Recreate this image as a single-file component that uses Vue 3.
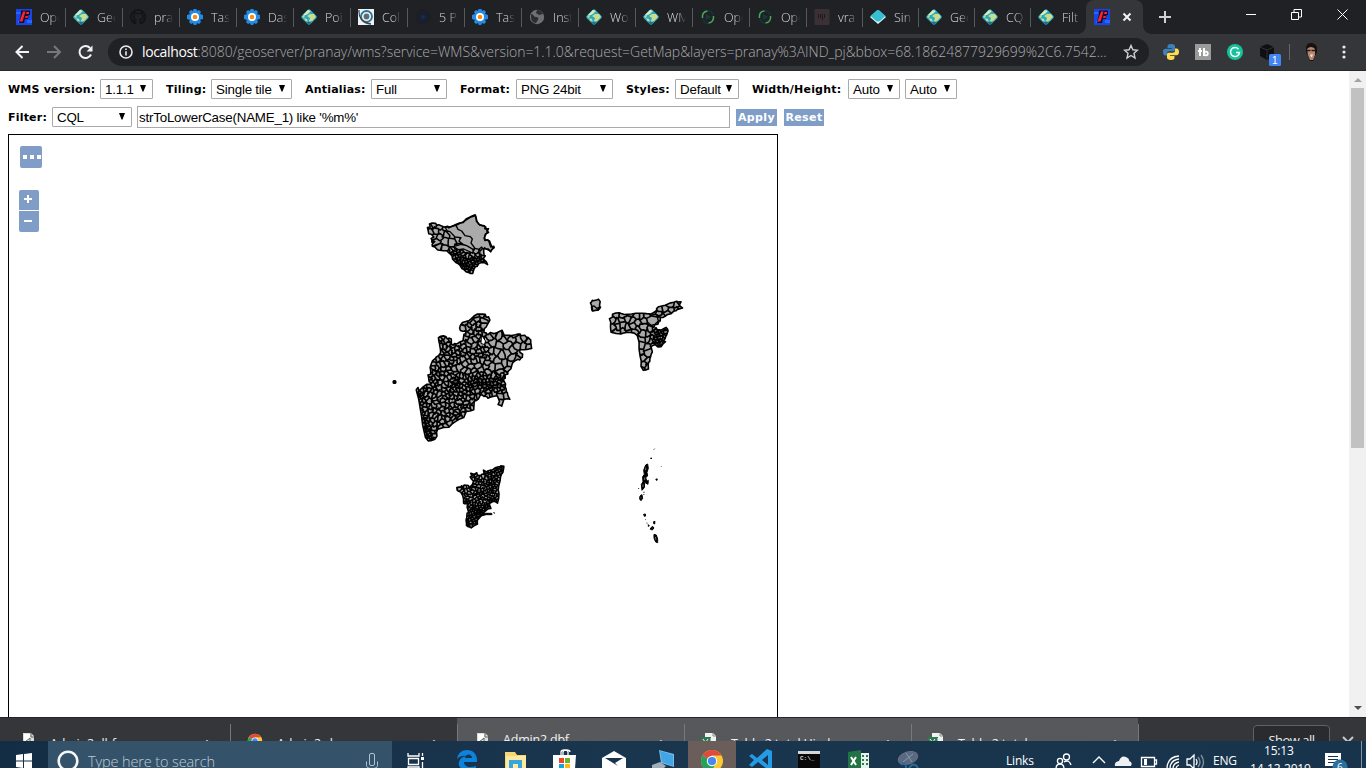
<script setup>
const tabs = [
  ['flag', 'Ope'], ['globe', 'Geo'], ['github', 'pra'], ['gear', 'Tas'], ['gear', 'Das'], ['globe', 'Poi'],
  ['target', 'Col'], ['dot', '5 Po'], ['gear', 'Tas'], ['world', 'Inst'], ['globe', 'Wo'], ['globe', 'WM'],
  ['sync', 'Ope'], ['sync', 'Ope'], ['bars', 'vra'], ['gem', 'Sin'], ['globe', 'Geo'], ['globe', 'CQ'], ['globe', 'Filt'],
].map(([icon, title], i) => ({ icon, title, w: i < 14 ? 57 : 56 }))

const options = [
  { label: 'WMS version:', lw: 92, value: '1.1.1', w: 53, gap: 13 },
  { label: 'Tiling:', lw: 45, value: 'Single tile', w: 81, gap: 13 },
  { label: 'Antialias:', lw: 66, value: 'Full', w: 76, gap: 13 },
  { label: 'Format:', lw: 56, value: 'PNG 24bit', w: 97, gap: 13 },
  { label: 'Styles:', lw: 49, value: 'Default', w: 64, gap: 13 },
  { label: 'Width/Height:', lw: 96, value: 'Auto', w: 52, gap: 5 },
  { label: '', lw: 0, value: 'Auto', w: 52, gap: 0 },
]

const downloads = [
  { name: 'Admin2.dbf', icon: 'file', w: 230, lit: false },
  { name: 'Admin2.shx', icon: 'chrome', w: 227, lit: false },
  { name: 'Admin2.dbf', icon: 'file', w: 227, lit: true, raised: true },
  { name: 'Table 2 tutal Hind', icon: 'sheet', w: 227, lit: true },
  { name: 'Table 2 tutal', icon: 'sheet', w: 227, lit: true },
]

/* ---- district mesh ---- */
let seedValue = 7
const rand = () => {
  seedValue = (seedValue * 1664525 + 1013904223) % 4294967296
  return seedValue / 4294967296
}
const parse = (s) => s.split(' ').map((p) => p.split(',').map(Number))
const inside = (poly, x, y) => {
  let hit = false
  for (let i = 0, j = poly.length - 1; i < poly.length; j = i++) {
    const [xi, yi] = poly[i], [xj, yj] = poly[j]
    if (yi > y !== yj > y && x < ((xj - xi) * (y - yi)) / (yj - yi) + xi) hit = !hit
  }
  return hit
}
const cut = (poly, a, b) => {
  const nx = b[0] - a[0], ny = b[1] - a[1]
  const mx = (a[0] + b[0]) / 2, my = (a[1] + b[1]) / 2
  const side = (p) => (p[0] - mx) * nx + (p[1] - my) * ny
  const out = []
  for (let i = 0; i < poly.length; i++) {
    const p = poly[i], q = poly[(i + 1) % poly.length]
    const sp = side(p), sq = side(q)
    if (sp <= 0) out.push(p)
    if (sp < 0 !== sq < 0) {
      const t = sp / (sp - sq)
      out.push([p[0] + (q[0] - p[0]) * t, p[1] + (q[1] - p[1]) * t])
    }
  }
  return out
}
/* smooth distortion that gives the borders a ragged look */
const warp = ([x, y]) => [x + 2.6 * Math.sin(y * 0.71 + x * 0.33), y + 2.6 * Math.sin(x * 0.63 - y * 0.29)]
const rough = (c) => c.flatMap((p, i) => {
  const q = c[(i + 1) % c.length]
  return [warp(p), warp([(p[0] + q[0]) / 2, (p[1] + q[1]) / 2])]
})
const toPath = (pts) => 'M' + pts.map((v) => v[0].toFixed(1) + ' ' + v[1].toFixed(1)).join('L') + 'Z'
const mesh = (outline, spacing) => {
  const poly = parse(outline)
  const xs = poly.map((p) => p[0]), ys = poly.map((p) => p[1])
  const x0 = Math.min(...xs), x1 = Math.max(...xs), y0 = Math.min(...ys), y1 = Math.max(...ys)
  const pts = []
  for (let n = 0; n < 9000; n++) {
    const x = x0 + rand() * (x1 - x0), y = y0 + rand() * (y1 - y0)
    const r = spacing(x, y)
    if (inside(poly, x, y) && pts.every((p) => (p[0] - x) ** 2 + (p[1] - y) ** 2 > r * r)) pts.push([x, y])
  }
  return pts.map((p) => {
    let c = [[p[0] - 30, p[1] - 30], [p[0] + 30, p[1] - 30], [p[0] + 30, p[1] + 30], [p[0] - 30, p[1] + 30]]
    for (const q of pts) if (q !== p && Math.abs(q[0] - p[0]) < 62 && Math.abs(q[1] - p[1]) < 62) c = cut(c, p, q)
    return toPath(rough(c))
  }).join('')
}

const regions = [
  {
    id: 'north', ox: 376, oy: 70, sw: 4.6,
    outline: '130,70 136,58 150,55 165,62 180,65 192,66 213,60 235,50 256,37 272,32 276,48 284,60 298,62 302,70 308,72 308,80 299,93 300,104 314,108 320,124 328,128 315,138 300,130 294,132 300,150 297,160 308,180 290,170 280,180 270,185 265,203 250,205 235,195 222,182 210,170 200,150 190,143 175,135 155,133 140,122 148,112 138,106 144,95 134,86',
    r: (x, y) => (y > 134 && x > 190 ? (x > 235 && y < 152 ? 16 : 6.8) : 15.5),
    extra: 'M213 61L235 50L256 37L272 32L276 48L284 60L298 62L302 70L308 72L308 80L299 93L300 104L314 108L320 124L328 128L315 138L300 130L294 132L290 126L282 133L270 130L258 114L262 102L256 95L240 92L230 78L219 73ZM180 66L192 66L213 61L219 73L230 78L240 92L256 95L262 102L258 114L270 130L264 133L245 122L236 119L222 108L228 98L210 96L195 80L187 78ZM205 125L228 118L245 122L264 133L264 145L250 138L236 132L220 134Z',
  },
  {
    id: 'central', ox: 376, oy: 70, sw: 5,
    outline: '225,365 230,355 245,348 258,340 280,328 300,330 312,338 312,350 302,365 298,380 305,388 315,385 328,384 350,378 360,388 380,390 398,385 410,392 425,395 438,403 438,428 420,432 408,436 405,440 415,450 408,460 400,465 385,475 376,490 366,505 362,512 356,524 362,545 362,560 370,570 372,582 358,585 352,603 342,600 340,575 326,572 310,578 300,574 290,570 278,582 270,590 265,612 245,620 235,635 215,650 190,665 165,672 155,680 152,705 135,710 120,700 115,660 105,610 93,560 98,548 105,560 120,538 135,540 135,528 128,518 135,505 134,490 145,470 154,455 163,448 168,432 163,415 163,400 175,392 185,402 200,402 200,420 208,417 220,412 235,410 238,390 244,380 225,374',
    r: (x, y) => (y > 560 && x > 335 ? 16 : y < 512 && x > 305 ? 16 : y > 508 && x > 200 && y < 560 ? 7.5 : x > 215 && y > 465 && y < 508 ? 14 : y > 550 && x < 108 + (y - 550) * 0.25 ? 6.5 : y < 430 && x > 230 ? 11.5 : 9.6),
    extra: '',
  },
  {
    id: 'east', ox: 561, oy: 150, sw: 5,
    outline: '120,100 130,88 145,85 165,88 200,82 220,82 240,85 256,80 262,70 275,65 300,55 318,50 333,48 330,58 335,68 320,75 310,78 290,90 276,95 270,105 265,115 253,122 245,128 248,140 256,130 272,134 288,127 292,140 290,155 280,164 285,172 274,187 258,180 244,187 245,210 238,220 236,235 238,250 218,254 212,230 208,195 204,152 195,147 170,142 150,145 125,142 122,125',
    r: (x, y) => (x > 247 && y > 126 ? 7 : 14),
    extra: 'M230 100L245 93L262 96L265 108L255 118L243 121L233 112Z',
  },
  { id: 'isle', ox: 561, oy: 150, sw: 3, outline: '63,62 64,50 72,45 88,45 89,56 92,70 84,76 66,77', r: () => 400, extra: 'M64 66L72 63L80 70L92 66L84 76L66 77Z' },
  {
    id: 'south', ox: 431, oy: 310, sw: 4.4,
    outline: '48,130 60,124 70,126 75,121 90,125 100,108 92,98 95,86 108,85 118,92 128,90 133,78 145,80 155,72 170,70 180,62 189,65 189,80 184,98 175,115 172,135 175,150 172,172 158,170 150,176 152,190 140,197 125,210 118,220 110,235 95,247 83,246 79,238 82,215 85,200 81,176 70,175 70,150 58,138',
    r: (x, y) => (x > 145 || y > 175 ? 6.2 : 7.8),
    extra: '',
  },
].map((g) => ({ ...g, d: toPath(rough(parse(g.outline))), cells: mesh(g.outline, g.r) }))

const islands = [
  'M617 60L623 57L625 70L621 82L623 93L617 98L621 109L625 106L624 118L614 112L613 128L606 136L604 118L609 111L608 95L613 88L611 76Z',
  'M600 153L606 149L608 160L603 167L599 162Z', 'M611 208L616 207L617 213L613 214Z',
  'M641 230L645 229L644 237L641 236Z', 'M632 249L638 244L642 249L637 255L631 253Z',
  'M642 268L649 270L653 282L653 293L647 291L642 279Z', 'M632 39L635 39L634 42Z', 'M648 102L652 102L651 106L648 105Z',
  'M625 239L628 243L625 244Z', 'M121 210L136 205L155 205L156 209L138 209L124 213Z', 'M161 203L163 203L163 205Z',
]
</script>

<template>
  <div class="screen">
    <svg class="defs" width="0" height="0">
      <symbol id="flag" viewBox="0 0 16 16"><rect width="16" height="16" fill="#1745e8" /><path d="M0 3h4v2H0zm11 8h5v3h-5zM2 12h4v2H2z" fill="#2867ff" /><path d="M5 1.500h9V6h-1.500l-.5 4H9v-.5L8 14H3L5 5z" fill="#150c35" /><path d="M7 2.500h2.500L6.500 12.500h-3zM10.500 3H13v2h-3zM9.500 7H12l-.5 2H9z" fill="#ff251c" /></symbol>
      <symbol id="globe" viewBox="0 0 16 16"><path d="M6.500 1q1.500-1.500 3 0L15 6.500q1.500 1.500 0 3L9.500 15q-1.500 1.500-3 0L1 9.500q-1.500-1.500 0-3z" fill="#29a8c4" /><path d="M7 1l3 1-3 3-3 1-1 3-2-1zm2 4l4 0 2 3-3 3-2 3-2-2 1-3-3-2zM3 9l3 1 1 3-2 0z" fill="#c8dd8e" /><path d="M2 6l5-5 2 1-4 4z" fill="#d3edcc" /><path d="M4 12l4 4 4-4-4 1z" fill="#1a719b" /></symbol>
      <symbol id="github" viewBox="0 0 16 16"><path d="M5.500 15v-2.500c-2 .4-2.700-.8-3-1.500M10.500 15v-2.500c0-.7-.2-1.200-.5-1.500 2-.2 3-1 3-3.300 0-1-.2-1.500-.6-2 .2-.5.2-1.200-.1-2 0 0-.7 0-2 .9a7 7 0 0 0-4 0c-1.300-.9-2-.9-2-.9-.3.800-.3 1.500-.1 2-.5.500-.7 1-.7 2 0 2.300 1 3.100 3 3.300" fill="none" stroke="#121315" stroke-width="1.300" /><path d="M5.500 14.800A7.200 7.200 0 1 1 10.500 14.800" fill="none" stroke="#131416" stroke-width="1.600" /></symbol>
      <symbol id="gear" viewBox="0 0 16 16"><path d="M6.500 0h3l.5 2 2-1 2 2-1 2 3 1v4l-3 .8 1 2.200-2 2-2-1-.8 2H6.800L6 14l-2 1-2-2 1-2-3-1V6l3-1-1-2 2-2 2 1z" fill="#228be6" /><circle cx="8" cy="8" r="4" fill="#fff" /><circle cx="8" cy="8" r="2.300" fill="#ff8a10" /></symbol>
      <symbol id="target" viewBox="0 0 16 16"><rect width="16" height="16" fill="#eef2f3" /><circle cx="8.500" cy="7.500" r="5.500" fill="none" stroke="#22769e" stroke-width="1.800" /><circle cx="8.500" cy="7.500" r="2.900" fill="#646b70" /><path d="M1 1c-.5 7 3 13 12 14" fill="none" stroke="#3b4146" stroke-width="1.300" /></symbol>
      <symbol id="dot" viewBox="0 0 16 16"><circle cx="8" cy="8" r="7.500" fill="#1b1f28" /><circle cx="8" cy="8" r="2" fill="#102d65" /></symbol>
      <symbol id="world" viewBox="0 0 16 16"><circle cx="8" cy="8" r="7.200" fill="#6c6f73" /><path d="M2 5c3 0 2 3 5 3 2 0 3 1 2 3l-2 3c-3 0-5-3-5-6zM8 1l-1 3 3 2 4-1c-1-2-3-4-6-4z" fill="#2b2d30" /></symbol>
      <symbol id="sync" viewBox="0 0 16 16"><path d="M7.500 2C4 2.500 2 5 2.500 9M8.500 14c3.500-.4 5.500-3 5-7" fill="none" stroke="#45a85a" stroke-width="1.500" /><path d="M3 10c.5 2 2 4 5 4.300M13 6c-.5-2-2-4-5-4.300" fill="none" stroke="#153334" stroke-width="1.800" /><path d="M6 5l5 3-5 3z" fill="#163a3e" /></symbol>
      <symbol id="bars" viewBox="0 0 16 16"><rect x=".5" width="15" height="16" rx="1" fill="#3b3035" /><path d="M4.500 5v4M6.500 5v4M8.500 5v6M10.500 5v4" stroke="#1d1a1e" /></symbol>
      <symbol id="gem" viewBox="0 0 16 16"><path d="M0 8l8-7 8 7-8 7z" fill="#e9fbfa" /><path d="M.5 7l6-5.500q1.500-1 3 0l6 5.500-5.500 5q-2 1.500-4 0z" fill="#35bfd0" /></symbol>
      <symbol id="chrome" viewBox="0 0 24 24"><circle cx="12" cy="12" r="11" fill="#fbc931" /><path d="M12 12L2.500 6.500A11 11 0 0 1 21.500 6.500H12z" fill="#df4a3f" /><path d="M2.500 6.500A11 11 0 0 0 11 23l5-9z" fill="#27a25b" /><circle cx="12" cy="12" r="5.200" fill="#f6f6f6" /><circle cx="12" cy="12" r="4.100" fill="#4688f1" /></symbol>
      <symbol id="file" viewBox="0 0 16 16"><path d="M3 0h8l3 3v13H3z" fill="#dcddd4" /><path d="M4 1h6v4L6 8H4z" fill="#fff" /><path d="M11 0v4h3M5 9l5-4v5" fill="none" stroke="#636660" /></symbol>
      <symbol id="sheet" viewBox="0 0 16 16"><path d="M4 0h8l3 3v13H4z" fill="#eef1ee" /><path d="M0 4h10v12H0z" fill="#2d7952" /><path d="M2 6l5 7M7 6l-5 7M9 6h5M9 8h5" stroke="#edf4ee" /><path d="M12 0v3h3" fill="none" stroke="#888" /></symbol>
    </svg>

    <header class="tabstrip">
      <div v-for="(t, i) in tabs" :key="i" class="tab" :style="{ width: t.w + 'px' }">
        <svg width="16" height="16"><use :href="'#' + t.icon" /></svg>
        <span>{{ t.title }}</span>
      </div>
      <div class="tab-active">
        <svg width="16" height="16"><use href="#flag" /></svg>
        <svg class="x" width="10" height="10"><path d="M1.500 1.500l7 7m0-7l-7 7" stroke="#f1f3f4" stroke-width="2" /></svg>
      </div>
      <svg class="plus" width="14" height="14"><path d="M7 1v12M1 7h12" stroke="#d0d1d3" stroke-width="2" /></svg>
      <div class="win">
        <svg width="10" height="10"><path d="M0 5.500h10" stroke="#fff" /></svg>
        <svg width="11" height="11"><path d="M.5 3.500h7v7h-7zM3 3V.5h7.500V8H8" fill="none" stroke="#fff" /></svg>
        <svg width="11" height="11"><path d="M.5.5l10 10m0-10l-10 10" stroke="#fff" /></svg>
      </div>
    </header>

    <div class="toolbar">
      <svg class="nav" width="100" height="36" fill="none" stroke-width="2">
        <path d="M29 18H17M22.500 12L16.500 18l6 6" stroke="#f1f3f4" />
        <path d="M47 18h12M54 12l6 6-6 6" stroke="#77787b" />
        <path d="M91 20.500a6 6 0 1 1-1-6.500" stroke="#f1f3f4" /><path d="M92.500 11.500v6h-6z" fill="#f1f3f4" />
      </svg>
      <div class="omnibox">
        <svg width="14" height="14" fill="none" stroke="#e8eaed" stroke-width="1.600"><circle cx="7" cy="7" r="6" /><path d="M7 6.200v4.200M7 3.500v1.500" /></svg>
        <span class="url"><b>localhost</b>:8080/geoserver/pranay/wms?service=WMS&amp;version=1.1.0&amp;request=GetMap&amp;layers=pranay%3AIND_pj&amp;bbox=68.18624877929699%2C6.7542...</span>
        <svg class="star" width="16" height="16"><path d="M8 1.500l1.900 4.300 4.600.4-3.500 3.100 1 4.700L8 11.500 4 14l1-4.700-3.500-3.100 4.600-.4z" fill="none" stroke="#cfd1d3" stroke-width="1.400" /></svg>
      </div>
      <div class="exts">
        <svg width="16" height="16"><path d="M8 0C5 0 4.500 1 4.500 2.500V4H9v.8H2.500C.8 4.800 0 6 0 8s.8 3.400 2.400 3.400H4V9.500C4 8 5 7.300 6.500 7.300h4c1.200 0 1.500-.8 1.500-2V2.500C12 1 11 0 8 0z" fill="#3b82bd" /><path d="M8 16c3 0 3.500-1 3.500-2.500V12H7v-.8h6.500C15.200 11.200 16 10 16 8s-.8-3.400-2.400-3.400H12v2.500C12 8 11 8.700 9.500 8.700h-4C4.300 8.700 4 9.500 4 10.700v2.800C4 15 5 16 8 16z" fill="#ffdc4e" /></svg>
        <svg width="16" height="16"><rect width="16" height="16" fill="#9a9a9a" /><path d="M5 4v8M3 7h4M9 4v8" stroke="#fff" stroke-width="2" /><circle cx="11" cy="9.500" r="1.800" fill="none" stroke="#fff" stroke-width="1.800" /></svg>
        <svg width="16" height="16"><circle cx="8" cy="8" r="8" fill="#15c39a" /><path d="M11.500 5.200A4.500 4.500 0 1 0 12.500 8.500H9" fill="none" stroke="#fff" stroke-width="1.500" /></svg>
        <svg width="22" height="24"><path d="M8 2l7 3v9l-7 4-7-4V5z" fill="#0e0f10" /><path d="M1 5l7 3 7-3M8 8v9" fill="none" stroke="#303135" /><rect x="10" y="12" width="12" height="12" rx="1.500" fill="#4285f4" /><text x="13" y="22" fill="#fff" font-size="10" font-family="Liberation Sans, sans-serif">1</text></svg>
      </div>
      <div class="profile">
        <svg width="16" height="20"><path d="M2 5q1-4 5-4t6 4l0 5-3 6-1 3H6l-1-3-3-6z" fill="#17120f" /><path d="M3 7q4-4 8 0l0 6-2 5H6l-2-5z" fill="#b98770" /><path d="M3 8.500h3.500m1 0h4" stroke="#18191b" stroke-width="1.300" /><path d="M6 12.500h3l-1 2.500H7z" fill="#f0e6df" /></svg>
      </div>
      <svg class="kebab" width="4" height="16" fill="#e8eaed"><circle cx="2" cy="3" r="1.600" /><circle cx="2" cy="8" r="1.600" /><circle cx="2" cy="13" r="1.600" /></svg>
    </div>

    <main class="page">
      <section class="content">
        <div class="row first">
          <div v-for="(o, i) in options" :key="i" class="opt" :style="{ marginRight: o.gap + 'px' }">
            <label :style="{ width: o.lw + 'px' }">{{ o.label }}</label>
            <div class="select" :style="{ width: o.w + 'px' }">{{ o.value }}<svg width="6" height="7"><path d="M0 0h6L3.500 6.500h-1z" /></svg></div>
          </div>
        </div>
        <div class="row second">
          <label class="flabel">Filter:</label>
          <div class="select cql">CQL<svg width="6" height="7"><path d="M0 0h6L3.500 6.500h-1z" /></svg></div>
          <div class="field">strToLowerCase(NAME_1) like '%m%'</div>
          <div class="btn apply">Apply</div>
          <div class="btn reset">Reset</div>
        </div>
        <div class="map">
          <svg class="layer" width="768" height="582">
            <g v-for="g in regions" :key="g.id" :transform="`translate(${g.ox} ${g.oy}) scale(.3333)`" stroke="#000" stroke-linejoin="round">
              <clipPath :id="g.id"><path :d="g.d" /></clipPath>
              <path :d="g.d" fill="#aaa" stroke="none" />
              <g :clip-path="`url(#${g.id})`"><path :d="g.cells" fill="#aaa" :stroke-width="g.sw" /></g>
              <path :d="g.extra" fill="#aaa" stroke-width="4" />
              <path :d="g.d" fill="none" stroke-width="4.800" />
            </g>
            <path d="M472.500 200l4 6-1 3.500-3.500-1z" fill="#fff" stroke="#000" />
            <rect x="383.500" y="245" width="4" height="4" rx="1.500" />
            <g transform="translate(431 310) scale(.3333)">
              <path v-for="(d, i) in islands" :key="i" :d="d" stroke="#000" stroke-width="3" stroke-linejoin="round" />
              <path d="M617 68v8M614 98v7M609 118v8M603 157v3M646 276l2 8M637 249h1" stroke="#aaa" stroke-width="2" />
              <path d="M641 14l3-3M612 140v4M596 129v3M617 222v2M621 233v3M664 64v2M610 147l3 3" stroke="#000" stroke-width="2.500" />
            </g>
          </svg>
          <div class="ctrl">
            <div class="dots"><i /><i /><i /></div>
            <div class="zin"><svg width="8" height="8"><path d="M4 0v8M0 4h8" stroke="#fff" stroke-width="2" /></svg></div>
            <div class="zout"><svg width="8" height="8"><path d="M0 4h8" stroke="#fff" stroke-width="2" /></svg></div>
          </div>
        </div>
      </section>
      <div class="scroll">
        <svg width="8" height="4"><path d="M0 4l4-4 4 4z" fill="#a3a3a3" /></svg>
        <div class="thumb" />
        <svg width="8" height="4"><path d="M0 0l4 4 4-4z" fill="#505050" /></svg>
      </div>
    </main>

    <footer class="shelf">
      <div v-for="(d, i) in downloads" :key="i" class="dl" :class="{ lit: d.lit, raised: d.raised }" :style="{ width: d.w + 'px' }">
        <svg width="16" height="16"><use :href="'#' + d.icon" /></svg>
        <span>{{ d.name }}</span>
        <svg class="up" width="8" height="5"><path d="M0 5l4-4 4 4" fill="none" stroke="#c8c9ca" stroke-width="2" /></svg>
      </div>
      <div class="showall">Show all</div>
      <svg class="close" width="12" height="12"><path d="M1 1l10 10m0-10L1 11" stroke="#c8c9ca" stroke-width="2" /></svg>
    </footer>

    <div class="taskbar">
      <svg class="start" width="48" height="27"><path d="M16 14l7-1v6.500h-7zM24 13l8-1v7.500h-8zM16 20.500h7V27l-7-1zM24 20.500h8V28l-8-1z" fill="#fff" /></svg>
      <div class="search">
        <svg width="22" height="22"><circle cx="11" cy="11" r="9.300" fill="none" stroke="#f4f6f7" stroke-width="2.600" /></svg>
        <span>Type here to search</span>
        <svg class="mic" width="12" height="20" fill="none" stroke="#b5c2cc"><rect x="3.500" y=".5" width="5" height="12" rx="1.500" /><path d="M.5 8.500v4q0 3 5.500 3t5.500-3v-4M6 16v4" /></svg>
      </div>
      <svg class="apps" width="974" height="27">
        <g stroke="#fff" fill="none" stroke-width="1.300"><path d="M16 12v3h11v-3M16.500 17.500h10v6h-10zM16 28v-2h11v2M30.500 12v3M30.500 21v7" /></g><path d="M29 16h3v3h-3z" fill="#fff" />
        <path d="M65 18C66 12 70 9 75 9c6 0 10 4 10 10v2H72c0 5 6 6 12 4v4H74c-6 0-8-5-7-8 1-4 4-5 7-6-4-1-7 1-9 3zm8-1h7c0-4-6-5-7 0z" fill="#0c83dc" />
        <path d="M113 11h10l2 3h9v14h-21z" fill="#f7d774" /><path d="M114 15h20v13h-20z" fill="#ffe9a0" /><path d="M117 28v-9h13v9h-4v-5h-5v5z" fill="#36a6dc" />
        <path d="M161 14h23l-1 14h-22z" fill="#fff" /><path d="M169 14v-3q0-2 3.500-2t3.500 2v3M171 14v-3q0-2 3.500-2t3.500 2" fill="none" stroke="#fff" stroke-width="1.300" /><path d="M167 17h5v5h-5z" fill="#e74925" /><path d="M173 17h5v5h-5z" fill="#6ab42d" /><path d="M167 23h5v5h-5z" fill="#18a0df" /><path d="M173 23h5v5h-5z" fill="#ffb712" />
        <path d="M210 17l12-7 12 7v11h-24z" fill="#fff" /><path d="M213 17h18l-8 5 3 3z" fill="#18334c" />
        <path d="M267 9l15 4v13l-13-4z" fill="#78bce7" /><path d="M268 10l13 4v11l-11-4z" fill="#42a5e4" /><path d="M260 24l8-3 6 4-3 3h-11z" fill="#9faeb8" />
        <path d="M296 0h48v27h-48z" fill="#6b5e5a" /><use href="#chrome" x="308" y="8" width="24" height="24" />
        <path d="M375 8l5 2v18h-5l-9-7-6 5-3-2 5-5-5-4 3-2 5 4zm1 6l-6 5 6 5z" fill="#239be5" />
        <path d="M406 10h22v18h-22z" fill="#090909" /><path d="M406 10h22v3h-22z" fill="#d6d6d6" /><text x="408" y="19" fill="#ddd" font-size="6" font-weight="bold" font-family="Liberation Mono, monospace">C:\_</text>
        <path d="M468 12h9v16h-9z" fill="#e8f1eb" /><path d="M470 15h2m2 0h2m-6 4h2m2 0h2m-6 4h2m2 0h2" stroke="#287c51" stroke-width="2" /><path d="M456 11l13-2v19h-13z" fill="#217346" /><path d="M459 16l5 8m0-8l-5 8" stroke="#fff" stroke-width="2" />
        <ellipse cx="516" cy="17" rx="10" ry="6" transform="rotate(-18 516 17)" fill="#566b83" stroke="#766a7e" /><path d="M511 21l10-8m-7-1l6 9" stroke="#8d97a6" /><path d="M509 24q5-4 5 3m3 0q5-7 9 0" fill="none" stroke="#276b9a" stroke-width="2" />
        <g fill="none" stroke="#fff" stroke-width="1.300"><circle cx="674.500" cy="16" r="3" /><circle cx="668" cy="20" r="2.600" /><path d="M664 28q0-5 4-5t4 5M672 21q5-3 7 3M701 22l6-6 6 6" /><path d="M749.500 16.500h13v9h-13zM763 19h1.500v4H763" /><path d="M775 28q0-12 12-13M778 28q0-9 9-10M781 28q0-6 6-7M784 28q0-3 3-4" /><path d="M795 18h3l4-4v14l-4-4h-3z" /><path d="M804 18q2 3 0 6" /><path d="M806 16q4 5 0 10M809 14q5 7 0 14" stroke="#8192a0" /></g>
        <path d="M752 18h3v6h-3z" fill="#fff" /><path d="M723 25q-1-4 4-5 2-6 7-4 4 2 3 4 4 1 2 5z" fill="#eef0f2" />
        <path d="M933 12h16v13h-16z" fill="#fff" /><path d="M936 15.500h10M936 18.500h10M936 21.500h7" stroke="#17324c" />
        <circle cx="948" cy="26" r="7.500" fill="#2a6f9f" /><text x="945" y="30" font-size="10" fill="#fff" font-family="Open Sans, sans-serif">6</text>
        <path d="M969.500 0v27" stroke="#8293a0" />
      </svg>
      <span class="t links">Links</span><span class="t eng">ENG</span><span class="t time">15:13</span><span class="t date">14-12-2019</span>
    </div>
  </div>
</template>

<style>
html, body { margin: 0; overflow: hidden; background: #fff; }
</style>

<style scoped>
.screen { position: relative; width: 1366px; height: 768px; overflow: hidden; display: flex; flex-direction: column; font-family: "Open Sans", "Noto Sans", sans-serif; }
.defs { position: absolute; }
svg { display: block; flex: none; }
.tabstrip { height: 34px; background: #202124; display: flex; padding-left: 8px; box-sizing: border-box; flex: none; }
.tab { position: relative; box-sizing: border-box; height: 34px; padding: 9px 0 0 8px; display: flex; flex: none; }
.tab::after { content: ""; position: absolute; right: -1px; top: 8px; width: 1px; height: 19px; background: #56585c; }
.tab:nth-child(19)::after { display: none; }
.tab span { margin-left: 8px; width: 19px; overflow: hidden; white-space: nowrap; font: 300 12.500px/17px "Open Sans", sans-serif; color: #d9dadc; -webkit-mask-image: linear-gradient(90deg, #000 55%, transparent 100%); mask-image: linear-gradient(90deg, #000 55%, transparent 100%); }
.tab-active { position: relative; width: 57px; height: 34px; background: #35363a; border-radius: 8px 8px 0 0; display: flex; box-sizing: border-box; padding: 9px 0 0 8px; flex: none; }
.tab-active::before, .tab-active::after { content: ""; position: absolute; bottom: 0; width: 8px; height: 8px; }
.tab-active::before { left: -8px; background: radial-gradient(circle at 0 0, transparent 7.500px, #35363a 8px); }
.tab-active::after { right: -8px; background: radial-gradient(circle at 100% 0, transparent 7.500px, #35363a 8px); }
.x { margin: 3px 0 0 12px; }
.plus { margin: 10px 0 0 15px; }
.win { margin: 9px 18px 0 auto; display: flex; gap: 35px; }
.toolbar { height: 36px; flex: none; background: #35363a; display: flex; align-items: center; }
.nav { width: 108px; }
.omnibox { width: 1041px; height: 28px; border-radius: 14px; background: #202124; display: flex; align-items: center; box-sizing: border-box; padding: 0 10px 0 11px; }
.url { margin-left: 9px; width: 974px; white-space: nowrap; font: 300 14px/20px "Open Sans", sans-serif; color: #a9aaad; letter-spacing: -.04px; }
.url b { font-weight: 400; color: #fff; letter-spacing: -.35px; }
.star { margin-left: auto; }
.exts { margin-left: 14px; display: flex; align-items: center; gap: 16px; height: 32px; }
.exts svg:last-child { width: 22px; height: 24px; margin-top: 4px; }
.profile { margin-left: 8px; border-left: 1px solid #66676a; height: 16px; padding-left: 14px; display: flex; align-items: center; }
.kebab { margin-left: 22px; }
.page { height: 647px; flex: none; border-top: 1px solid #27282b; box-sizing: border-box; display: flex; overflow: hidden; background: #fff; }
.content { width: 1349px; padding-left: 8px; box-sizing: border-box; }
.row { display: flex; align-items: center; font: 13.333px "Liberation Sans", sans-serif; letter-spacing: -.2px; }
.first { height: 20px; margin-top: 8px; }
.opt { display: flex; align-items: center; }
label { font: bold 11px/16px "DejaVu Sans", sans-serif; white-space: nowrap; letter-spacing: .2px; flex: none; padding-top: 2px; }
.select { height: 20px; box-sizing: border-box; border: 1px solid #a9a9a9; border-radius: 1px; display: flex; justify-content: space-between; align-items: center; padding: 0 6px 0 4px; flex: none; white-space: nowrap; }
.select svg { margin-top: -1px; }
.second { height: 22px; margin-top: 7px; }
.flabel { width: 44px; }
.cql { width: 80px; }
.field { margin-left: 5px; width: 593px; height: 22px; box-sizing: border-box; border: 1px solid #a9a9a9; padding: 1px 1px 0; line-height: 20px; }
.btn { height: 17px; margin-left: 6px; background: #7f9dc6; color: #fff; font: bold 11px/17px "DejaVu Sans", sans-serif; text-align: center; letter-spacing: .4px; }
.apply { width: 41px; }
.reset { width: 40px; margin-left: 7px; }
.map { position: relative; margin-top: 6px; width: 768px; height: 600px; border: 1px solid #000; }
.ctrl { position: absolute; left: 10px; top: 11px; }
.dots { margin-left: 1px; width: 22px; height: 22px; border-radius: 2px; background: #7f9dc6; display: flex; gap: 3px; align-items: center; padding-left: 3px; box-sizing: border-box; }
.dots i { width: 4px; height: 4px; background: #fff; }
.zin, .zout { width: 20px; height: 20px; background: #7f9dc6; box-sizing: border-box; padding: 5px; border-radius: 2px 2px 0 0; }
.zin { margin-top: 22px; }
.zout { margin-top: 1px; height: 21px; padding-top: 6px; border-radius: 0 0 2px 2px; }
.scroll { width: 17px; background: #f1f1f1; display: flex; flex-direction: column; align-items: center; padding: 7px 0; box-sizing: border-box; }
.thumb { width: 13px; height: 360px; background: #c1c1c1; margin: 6px 0 auto; }
.shelf { height: 24px; flex: none; background: #35363a; border-top: 1px solid #242528; box-sizing: border-box; display: flex; overflow: hidden; }
.dl { position: relative; box-sizing: border-box; height: 40px; display: flex; padding: 15px 19px 0 20px; flex: none; color: #f0f0f1; }
.dl:nth-child(n+2) { padding-left: 17px; }
.dl::after { content: ""; position: absolute; right: -1px; top: 6px; width: 1px; height: 17px; background: #77787b; z-index: 1; }
.dl.lit { background: #57585b; }
.dl span { margin: 2px 0 0 14px; font: 400 12.500px/18px "Open Sans", sans-serif; letter-spacing: -.2px; white-space: nowrap; }
.dl.raised span { margin: -2px 0 0 13px; }
.up { margin: 7px 0 0 auto; }
.showall { margin: 7px 0 0 115px; width: 77px; height: 30px; box-sizing: border-box; border: 1px solid #606164; border-radius: 4px; background: #2a2b2e; color: #e8e9ea; text-align: center; font: 13px/28px "Open Sans", sans-serif; letter-spacing: -.5px; flex: none; }
.close { margin: 18px 0 0 12px; }
.taskbar { position: relative; height: 27px; flex: none; display: flex; background: linear-gradient(90deg, #122d44, #1a354e 45%, #18344c); overflow: hidden; }
.search { width: 344px; box-sizing: border-box; background: #34536a; display: flex; padding: 9px 0 0 9px; }
.search span { margin: 2px 0 0 9px; font: 300 14.500px/20px "Open Sans", sans-serif; color: #bccad3; white-space: nowrap; letter-spacing: -.12px; }
.mic { margin: 3px 14px 0 auto; }
.t { position: absolute; color: #fff; font: 12px/16px "Open Sans", sans-serif; white-space: nowrap; letter-spacing: -.2px; }
.links { left: 1006px; top: 12px; }
.eng { left: 1213px; top: 12px; }
.time { left: 1264px; top: 2px; }
.date { left: 1250px; top: 20px; }
</style>
